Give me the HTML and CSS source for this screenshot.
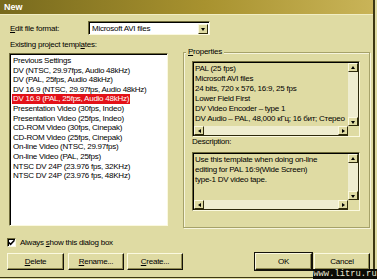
FILE: index.html
```html
<!DOCTYPE html>
<html lang="en">
<head>
  <meta charset="UTF-8" />
  <title>New</title>
  <link rel="stylesheet" href="styles.css">
</head>
<body>
  <div class="window">
    <div class="titlebar">New</div>

    <div class="content">
      <div class="format-row">
        <span class="label"><u>E</u>dit file format:</span>
        <div class="combo">
          <span class="combo-text">Microsoft AVI files</span>
          <span class="btn-arrow"><i class="tri down"></i></span>
        </div>
      </div>

      <div class="main">
        <div class="left-col">
          <div class="list-label">Existing project templ<u>a</u>tes:</div>
          <div class="listbox">
            <div class="item"><span>Previous Settings</span></div>
            <div class="item"><span>DV (NTSC, 29.97fps, Audio 48kHz)</span></div>
            <div class="item"><span>DV (PAL, 25fps, Audio 48kHz)</span></div>
            <div class="item"><span>DV 16.9 (NTSC, 29.97fps, Audio 48kHz)</span></div>
            <div class="item selected"><span>DV 16.9 (PAL, 25fps, Audio 48kHz)</span></div>
            <div class="item"><span>Presentation Video (30fps, Indeo)</span></div>
            <div class="item"><span>Presentation Video (25fps, Indeo)</span></div>
            <div class="item"><span>CD-ROM Video (30fps, Cinepak)</span></div>
            <div class="item"><span>CD-ROM Video (25fps, Cinepak)</span></div>
            <div class="item"><span>On-line Video (NTSC, 29.97fps)</span></div>
            <div class="item"><span>On-line Video (PAL, 25fps)</span></div>
            <div class="item"><span>NTSC DV 24P (23.976 fps, 32KHz)</span></div>
            <div class="item"><span>NTSC DV 24P (23.976 fps, 48KHz)</span></div>
          </div>
        </div>

        <fieldset class="group">
          <legend><u>P</u>roperties</legend>
          <div class="memo props">
            <div class="memo-text">
              PAL (25 fps)<br>
              Microsoft AVI files<br>
              24 bits, 720 x 576, 16:9, 25 fps<br>
              Lower Field First<br>
              DV Video Encoder &ndash; type 1<br>
              DV Audio &ndash; PAL, 48,000 кГц; 16 бит; Стерео
            </div>
            <div class="vscroll">
              <span class="btn-arrow"><i class="tri up"></i></span>
              <span class="track"></span>
              <span class="btn-arrow"><i class="tri down"></i></span>
            </div>
            <div class="hscroll">
              <span class="btn-arrow"><i class="tri left"></i></span>
              <span class="track"></span>
              <span class="btn-arrow"><i class="tri right"></i></span>
            </div>
            <div class="corner"></div>
          </div>

          <div class="desc-label">Description:</div>
          <div class="memo desc">
            <div class="memo-text">
              Use this template when doing on-line<br>
              editing for PAL 16:9(Wide Screen)<br>
              type-1 DV video tape.
            </div>
            <div class="vscroll">
              <span class="btn-arrow"><i class="tri up"></i></span>
              <span class="track"></span>
              <span class="btn-arrow"><i class="tri down"></i></span>
            </div>
            <div class="hscroll">
              <span class="btn-arrow"><i class="tri left"></i></span>
              <span class="track"></span>
              <span class="btn-arrow"><i class="tri right"></i></span>
            </div>
            <div class="corner"></div>
          </div>
        </fieldset>
      </div>

      <div class="check-row">
        <span class="checkbox">
          <svg width="7" height="7" viewBox="0 0 7 7"><path d="M0.5 3.2 L2.6 5.4 L6.5 1.2" fill="none" stroke="#000" stroke-width="1.6"/></svg>
        </span>
        <span>Always <u>s</u>how this dialog box</span>
      </div>

      <div class="button-row">
        <button class="btn w57"><u>D</u>elete</button>
        <button class="btn w56 gap4"><u>R</u>ename...</button>
        <button class="btn w56 gap3"><u>C</u>reate...</button>
        <span class="spacer"></span>
        <button class="btn w57 default">OK</button>
        <button class="btn w56 gap2">Cancel</button>
      </div>
    </div>
  </div>

  <div class="watermark">www.litru.ru</div>
</body>
</html>
```

FILE: styles.css
```css
* {
  box-sizing: border-box;
}
body {
  margin: 0;
  background: #dfdba3;
  font-family: "Liberation Sans", Arial, sans-serif;
  font-size: 8px;
  letter-spacing: -0.25px;
  color: #000;
  overflow: hidden;
}
u {
  text-decoration: underline;
}
.window {
  position: relative;
  width: 375px;
  height: 278px;
  border-right: 2px solid #3c3712;
  border-bottom: 1px solid #3c3712;
}
.titlebar {
  height: 15px;
  line-height: 14px;
  padding-left: 4px;
  background: linear-gradient(to right, #786a1d, #a8922f 55%, #c9b458);
  border-bottom: 1px solid #f1eec4;
  color: #fff;
  font-weight: bold;
  font-size: 9px;
  letter-spacing: 0;
}
.content {
  padding: 6px 3px 0 7px;
}
.format-row {
  display: flex;
  align-items: center;
  height: 14px;
}
.format-row .label {
  width: 81px;
  padding-left: 3px;
}
.combo {
  display: flex;
  align-items: center;
  width: 122px;
  height: 14px;
  background: #fff;
  border: 1px solid;
  border-color: #6e6a3a #fbf9e0 #fbf9e0 #6e6a3a;
  box-shadow: inset 1px 1px 0 #000;
  padding: 1px 1px 0 2px;
}
.combo-text {
  flex: 1;
  padding-left: 1px;
}
.btn-arrow {
  display: flex;
  align-items: center;
  justify-content: center;
  width: 10px;
  height: 10px;
  background: #dfdba3;
  border: 1px solid;
  border-color: #fbf9e0 #2e2a0c #2e2a0c #fbf9e0;
  flex-shrink: 0;
}
.tri {
  width: 0;
  height: 0;
  border: 2px solid transparent;
}
.tri.down {
  border-top: 3px solid #000;
  border-bottom: 0;
  margin-top: 1px;
}
.tri.up {
  border-bottom: 3px solid #000;
  border-top: 0;
}
.tri.left {
  border-right: 3px solid #000;
  border-left: 0;
}
.tri.right {
  border-left: 3px solid #000;
  border-right: 0;
}
.main {
  display: flex;
  margin-top: 4px;
}
.left-col {
  width: 159px;
  margin-left: 2px;
}
.list-label {
  height: 12px;
  line-height: 12px;
  padding-left: 1px;
}
.listbox {
  margin-top: 2px;
  height: 173px;
  background: #fff;
  border: 1px solid;
  border-color: #6e6a3a #fbf9e0 #fbf9e0 #6e6a3a;
  box-shadow: inset 1px 1px 0 #000;
  padding: 2px 0 0 2px;
}
.item {
  height: 9.6px;
  line-height: 9.6px;
  white-space: nowrap;
}
.item span {
  padding: 0 1px;
}
.item.selected span {
  background: #e31118;
  color: #fff;
  display: inline-block;
  height: 10px;
}
.group {
  margin: 8px 0 0 15px;
  padding: 0 9px 0 8px;
  width: 187px;
  height: 181px;
  border: 1px solid #a6a26a;
  box-shadow: inset 1px 1px 0 #f6f4dc, 1px 1px 0 #f6f4dc;
  min-width: 0;
}
.group legend {
  margin-left: -6px;
  padding: 0 2px;
  line-height: 10px;
  background: #dfdba3;
}
.memo {
  display: grid;
  grid-template-columns: 1fr 11px;
  grid-template-rows: 1fr 10px;
  border: 1px solid;
  border-color: #6e6a3a #fbf9e0 #fbf9e0 #6e6a3a;
  box-shadow: inset 1px 1px 0 #000;
  padding: 1px 0 0 1px;
}
.memo.props {
  margin-top: 4px;
  height: 76px;
}
.memo.desc {
  margin-top: 6px;
  height: 59px;
}
.memo-text {
  padding: 1px 0 0 1px;
  line-height: 10px;
  white-space: nowrap;
  overflow: hidden;
}
.vscroll {
  display: flex;
  flex-direction: column;
  border-right: 1px solid #2e2a0c;
}
.hscroll {
  display: flex;
  border-bottom: 1px solid #2e2a0c;
}
.vscroll .btn-arrow,
.hscroll .btn-arrow {
  width: 10px;
  height: 9px;
}
.track {
  flex: 1;
  background: #efedd0;
}
.corner {
  background: #dfdba3;
}
.check-row {
  display: flex;
  align-items: center;
  gap: 4px;
  height: 12px;
  margin-top: 8px;
}
.checkbox {
  display: flex;
  align-items: center;
  justify-content: center;
  width: 9px;
  height: 9px;
  background: #fff;
  border: 1px solid;
  border-color: #6e6a3a #fbf9e0 #fbf9e0 #6e6a3a;
  box-shadow: inset 1px 1px 0 #000;
}
.button-row {
  display: flex;
  margin-top: 5px;
}
.spacer {
  flex: 1;
}
.btn {
  height: 17px;
  padding: 0;
  background: #dfdba3;
  font-family: inherit;
  font-size: 8px;
  letter-spacing: -0.25px;
  color: #000;
  border: 1px solid;
  border-color: #fbf9e0 #14120a #14120a #fbf9e0;
  box-shadow: inset -1px -1px 0 #8f8a52;
}
.btn.default {
  outline: 1px solid #14120a;
}
.w57 { width: 57px; }
.w56 { width: 56px; }
.gap4 { margin-left: 4px; }
.gap3 { margin-left: 3px; }
.gap2 { margin-left: 2px; }
.watermark {
  position: absolute;
  right: 0;
  bottom: 0;
  width: 64px;
  height: 10px;
  line-height: 10px;
  background: #0c0b06;
  color: #e8e6d2;
  font-family: "Liberation Mono", monospace;
  font-size: 8.8px;
  letter-spacing: 0;
  text-align: center;
}
```
